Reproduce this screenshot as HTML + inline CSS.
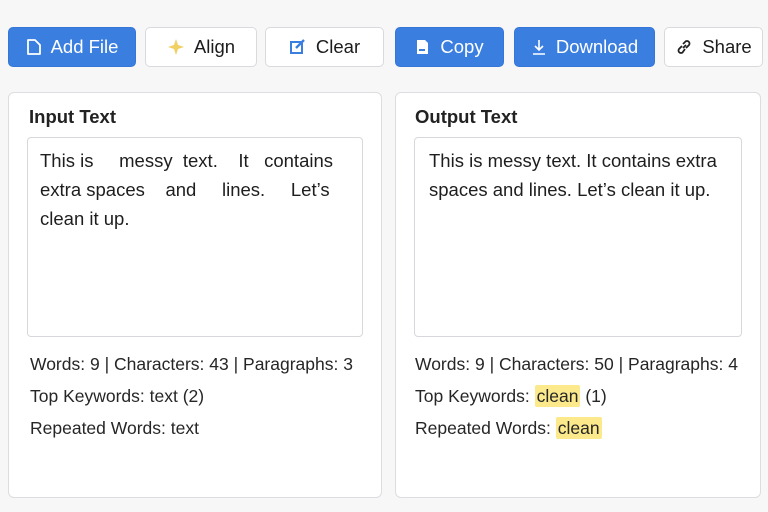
<!DOCTYPE html>
<html><head><style>
*{box-sizing:border-box;margin:0;padding:0}
body{width:768px;height:512px;background:#f7f7f8;font-family:"Liberation Sans",sans-serif;position:relative;overflow:hidden;color:#1f1f1f}
.b{position:absolute;top:27px;height:40px;border-radius:5px;display:flex;align-items:center;justify-content:center;font-size:18.5px;gap:9px}
.p{background:#3a7ee0;color:#fff;border:1px solid #3576d6}
.s{background:#fff;border:1px solid #d8dadd;color:#1c1c1c}
.panel{position:absolute;top:92px;height:406px;background:#fff;border:1px solid #dcdde0;border-radius:6px}
.h{position:absolute;top:106px;font-size:18.5px;font-weight:bold;color:#222}
.ta{position:absolute;top:137px;height:200px;border:1px solid #d6d8db;border-radius:4px;background:#fff;font-size:18.5px;line-height:29px;padding:8px 12px;color:#1e1e1e}
.st{position:absolute;font-size:17.5px;color:#262626;white-space:nowrap}
.hl{background:#fbe98c;padding:1px 2px;border-radius:2px}
</style></head><body>
<div class="b p" style="left:8px;width:128px"><svg width="16" height="18" viewBox="0 0 16 18"><path d="M2 2h7l5 5v9H2z" fill="none" stroke="#fff" stroke-width="1.8" stroke-linejoin="round"/></svg>Add File</div>
<div class="b s" style="left:145px;width:112px"><svg width="18" height="18" viewBox="0 0 18 18"><path d="M9 1L11 7 17 9 11 11 9 17 7 11 1 9 7 7z" fill="#f0d060"/></svg>Align</div>
<div class="b s" style="left:265px;width:119px"><svg width="18" height="18" viewBox="0 0 18 18"><rect x="2" y="4" width="11" height="11" fill="none" stroke="#3a7ee0" stroke-width="2"/><path d="M7 10L15 2" stroke="#3a7ee0" stroke-width="2.4"/></svg>Clear</div>
<div class="b p" style="left:395px;width:109px"><svg width="16" height="18" viewBox="0 0 16 18"><path d="M2 2h8l3 3v11H2z" fill="#fff"/><rect x="4" y="11" width="6" height="2" fill="#3a7ee0"/></svg>Copy</div>
<div class="b p" style="left:514px;width:141px"><svg width="16" height="18" viewBox="0 0 16 18"><path d="M8 2v10M4 8l4 4 4-4M2 16h12" fill="none" stroke="#fff" stroke-width="1.6"/></svg>Download</div>
<div class="b s" style="left:664px;width:99px"><svg width="18" height="18" viewBox="0 0 18 18"><path d="M8 10l3-3M7 8L4 11a2.5 2.5 0 003.5 3.5L10 11M11 10l3-3a2.5 2.5 0 00-3.5-3.5L8 6" fill="none" stroke="#222" stroke-width="1.8"/></svg>Share</div>

<div class="panel" style="left:8px;width:374px"></div>
<div class="panel" style="left:395px;width:366px"></div>
<div class="h" style="left:29px">Input Text</div>
<div class="h" style="left:415px">Output Text</div>
<div class="ta" style="left:27px;width:336px;white-space:pre">This is     messy  text.    It   contains
extra spaces    and     lines.     Let’s
clean it up.</div>
<div class="ta" style="left:414px;width:328px;padding-left:14px">This is messy text. It contains extra<br>spaces and lines. Let’s clean it up.</div>
<div class="st" style="left:30px;top:354px">Words: 9 | Characters: 43 | Paragraphs: 3</div>
<div class="st" style="left:30px;top:386px">Top Keywords: text (2)</div>
<div class="st" style="left:30px;top:418px">Repeated Words: text</div>
<div class="st" style="left:415px;top:354px">Words: 9 | Characters: 50 | Paragraphs: 4</div>
<div class="st" style="left:415px;top:386px">Top Keywords: <span class="hl">clean</span> (1)</div>
<div class="st" style="left:415px;top:418px">Repeated Words: <span class="hl">clean</span></div>
</body></html>
